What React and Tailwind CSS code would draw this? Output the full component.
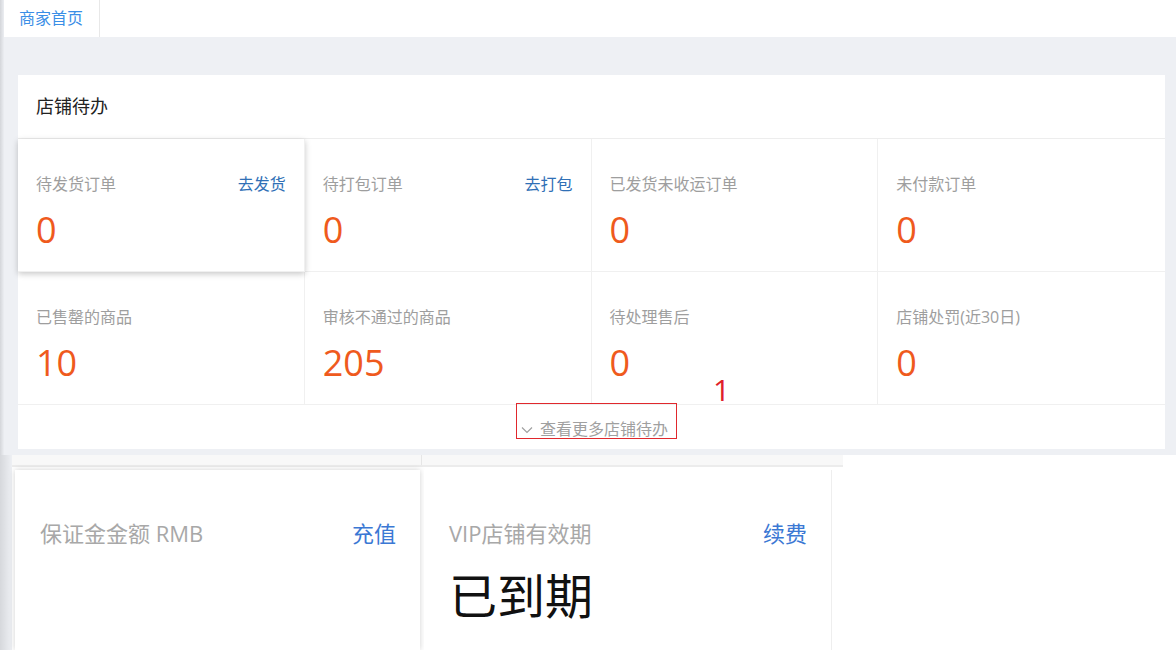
import React from 'react';

const font = { fontFamily: '"Open Sans", "Noto Sans CJK SC", sans-serif' };

const todos = [
  { label: '待发货订单', value: '0', action: '去发货', active: true },
  { label: '待打包订单', value: '0', action: '去打包' },
  { label: '已发货未收运订单', value: '0' },
  { label: '未付款订单', value: '0' },
  { label: '已售罄的商品', value: '10' },
  { label: '审核不通过的商品', value: '205' },
  { label: '待处理售后', value: '0' },
  { label: '店铺处罚(近30日)', value: '0' },
];

function TodoCell({ item, index }) {
  const lastCol = index % 4 === 3;
  return (
    <div
      className={
        'h-[133px] pl-[18px] pr-[18px] pt-[35px] border-b border-[#f0f0f0] bg-white ' +
        (lastCol ? '' : 'border-r ') +
        (item.active ? 'relative z-10 shadow-[0_2px_6px_rgba(0,0,0,0.22)]' : '')
      }
    >
      <div className="flex items-center justify-between text-[16px] leading-[20px]">
        <span className="text-[#9e9e9e]">{item.label}</span>
        {item.action && <a className="text-[#3070b6]">{item.action}</a>}
      </div>
      <div className="mt-[16px] text-[36px] leading-[40px] text-[#ef5a1d]">{item.value}</div>
    </div>
  );
}

function InfoCard({ label, action, value, shadow }) {
  return (
    <div
      className={
        'h-full pl-[25px] pr-[24px] pt-[50px] bg-white ' +
        (shadow ? 'w-[405px] shadow-[0_0_6px_rgba(0,0,0,0.18)]' : 'w-[408px] border-r border-[#eeeeee]')
      }
    >
      <div className="flex items-center justify-between text-[22px] leading-[26px]">
        <span className="text-[#a8a8a8]">{label}</span>
        <a className="text-[#3b78d4]">{action}</a>
      </div>
      {value && <div className="mt-[22px] text-[48px] leading-[56px] text-[#111]">{value}</div>}
    </div>
  );
}

export default function App() {
  return (
    <div className="w-[1176px] h-[650px] overflow-hidden bg-[#eef0f4] flex flex-col" style={font}>
      <div className="h-[455px] flex">
        <div className="w-[4px] bg-gradient-to-r from-[#d4d6da] to-[#eceef2]" />
        <div className="flex-1 flex flex-col">
          <div className="h-[37px] bg-white flex">
            <div className="w-[96px] border-r border-[#e8e8e8] pl-[15px] text-[16px] leading-[36px] text-[#3a8ee6]">
              商家首页
            </div>
          </div>
          <div className="mt-[38px] ml-[14px] mr-[11px] bg-white">
            <div className="h-[64px] pl-[18px] flex items-center border-b border-[#ededed] text-[18px] text-[#222]">
              店铺待办
            </div>
            <div className="grid grid-cols-4">
              {todos.map((item, i) => (
                <TodoCell key={item.label} item={item} index={i} />
              ))}
            </div>
            <div className="h-[44px] flex justify-center">
              <div className="relative ml-[10px] -mt-[2px] h-[36px] w-[161px] border border-[#e0282d] flex items-start pt-[15px] pl-[3px] gap-[6px] text-[16px] leading-[20px] text-[#a0a0a0]">
                <svg className="mt-[4px]" width="14" height="14" viewBox="0 0 14 14" fill="none" stroke="#a0a0a0" strokeWidth="1.2">
                  <path d="M2 4.5l5 5 5-5" />
                </svg>
                <span>查看更多店铺待办</span>
                <span className="absolute left-[196px] -top-[30px] text-[30px] leading-[32px] text-[#e0202a]">1</span>
              </div>
            </div>
          </div>
        </div>
      </div>
      <div className="flex-1 flex">
        <div className="w-[12px] bg-gradient-to-r from-[#d6d8dc] to-[#eef0f4]" />
        <div className="flex-1 bg-white flex flex-col">
          <div className="h-[12px] w-[831px] bg-[#f8f8f8] border-b-2 border-[#ececec] flex">
            <div className="w-[410px] border-r border-[#e6e6e6]" />
          </div>
          <div className="flex-1 flex pt-[3px] pl-[3px] gap-[4px]">
            <InfoCard label="保证金金额 RMB" action="充值" shadow />
            <InfoCard label="VIP店铺有效期" action="续费" value="已到期" />
          </div>
        </div>
      </div>
    </div>
  );
}
